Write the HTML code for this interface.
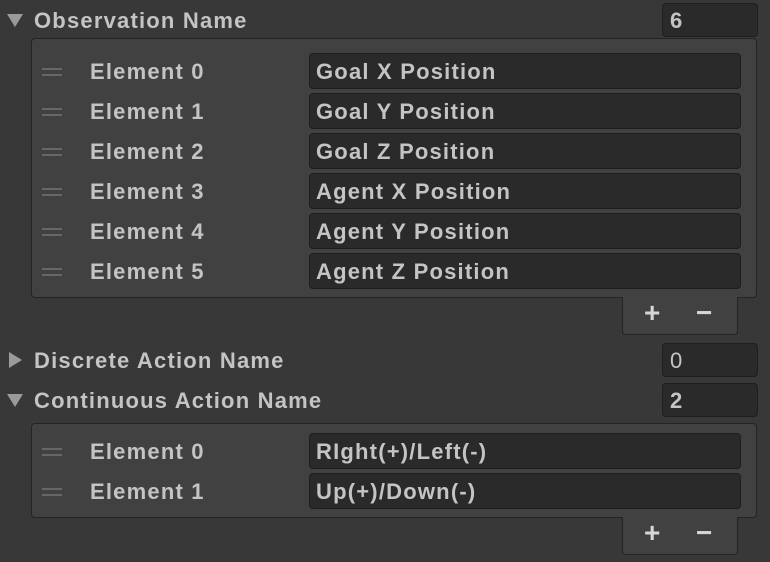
<!DOCTYPE html>
<html><head><style>
body{margin:0;width:770px;height:562px;background:#383838;font-family:"Liberation Sans",sans-serif;font-size:22px;font-weight:bold;letter-spacing:1.2px;color:#c4c4c4;position:relative;overflow:hidden}
.a{position:absolute}
.hdr{left:34px;height:36px;line-height:36px}
.tri{left:7px;width:0;height:0}
.down{border-left:8px solid transparent;border-right:8px solid transparent;border-top:13px solid #9a9a9a}
.right{border-top:8px solid transparent;border-bottom:8px solid transparent;border-left:13px solid #9a9a9a}
.num{left:662px;height:32px;background:#2a2a2a;border:1px solid #1e1e1e;border-radius:4px;line-height:34px;padding-left:7px;width:87px}
.panel{left:31px;width:724px;background:#414141;border:1px solid #242424;border-radius:4px}
.foot{left:622px;width:114px;background:#414141;border:1px solid #242424;border-top:none;border-radius:0 0 4px 4px}
.lbl{left:90px;height:36px;line-height:38px}
.fld{left:309px;width:424px;height:34px;background:#2a2a2a;border:1px solid #1e1e1e;border-radius:4px;line-height:36px;padding-left:6px}
.h{left:42px;width:20px;height:2px;background:#666;box-shadow:0 6px 0 #666}
.pm{font-size:28px;color:#d6d6d6;font-weight:bold}
</style></head><body>
<div class="a tri down" style="top:14px"></div>
<div class="a hdr" style="top:3px">Observation Name</div>
<div class="a num" style="top:3px">6</div>
<div class="a panel" style="top:38px;height:258px"></div>
<div class="a foot" style="top:297px;height:37px"></div>
<div class="a pm" style="left:644px;top:297px">+</div>
<div class="a pm" style="left:696px;top:297px">−</div>

<div class="a h" style="top:68px"></div><div class="a lbl" style="top:53px">Element 0</div><div class="a fld" style="top:53px">Goal X Position</div>
<div class="a h" style="top:108px"></div><div class="a lbl" style="top:93px">Element 1</div><div class="a fld" style="top:93px">Goal Y Position</div>
<div class="a h" style="top:148px"></div><div class="a lbl" style="top:133px">Element 2</div><div class="a fld" style="top:133px">Goal Z Position</div>
<div class="a h" style="top:188px"></div><div class="a lbl" style="top:173px">Element 3</div><div class="a fld" style="top:173px">Agent X Position</div>
<div class="a h" style="top:228px"></div><div class="a lbl" style="top:213px">Element 4</div><div class="a fld" style="top:213px">Agent Y Position</div>
<div class="a h" style="top:268px"></div><div class="a lbl" style="top:253px">Element 5</div><div class="a fld" style="top:253px">Agent Z Position</div>

<div class="a tri right" style="top:352px;left:9px"></div>
<div class="a hdr" style="top:343px">Discrete Action Name</div>
<div class="a num" style="top:343px;font-weight:normal">0</div>
<div class="a tri down" style="top:394px"></div>
<div class="a hdr" style="top:383px">Continuous Action Name</div>
<div class="a num" style="top:383px">2</div>
<div class="a panel" style="top:423px;height:93px"></div>
<div class="a foot" style="top:517px;height:37px"></div>
<div class="a pm" style="left:644px;top:517px">+</div>
<div class="a pm" style="left:696px;top:517px">−</div>
<div class="a h" style="top:448px"></div><div class="a lbl" style="top:433px">Element 0</div><div class="a fld" style="top:433px">RIght(+)/Left(-)</div>
<div class="a h" style="top:488px"></div><div class="a lbl" style="top:473px">Element 1</div><div class="a fld" style="top:473px">Up(+)/Down(-)</div>
</body></html>
